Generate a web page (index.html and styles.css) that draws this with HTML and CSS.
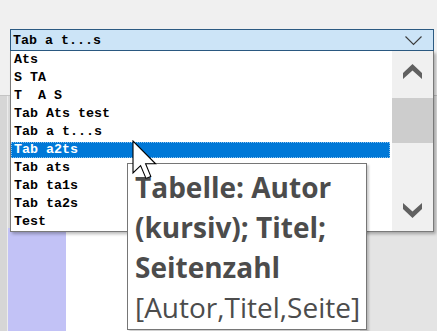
FILE: index.html
```html
<!DOCTYPE html>
<html lang="de">
<head>
  <meta charset="UTF-8" />
  <title>Tabellenformat</title>
  <link rel="stylesheet" href="styles.css">
</head>
<body>
  <div class="screen">
    <div class="combo">
      <span class="combo-text">Tab a t...s</span>
      <svg class="combo-arrow" width="17" height="10" viewBox="0 0 17 10">
        <polyline points="0.5,0.5 8.5,8.5 16.5,0.5" fill="none" stroke="#3c3c3c" stroke-width="1.1" />
      </svg>
    </div>

    <div class="backdrop">
      <div class="strip"></div>
      <div class="side">
        <div class="side-head"></div>
        <div class="side-body"></div>
      </div>
      <div class="pane"></div>
      <div class="pane-right"></div>
    </div>

    <div class="popup">
      <ul class="items">
        <li><span>Ats</span></li>
        <li><span>S TA</span></li>
        <li><span>T  A S</span></li>
        <li><span>Tab Ats test</span></li>
        <li><span>Tab a t...s</span></li>
        <li class="selected"><span>Tab a2ts</span></li>
        <li><span>Tab ats</span></li>
        <li><span>Tab ta1s</span></li>
        <li><span>Tab ta2s</span></li>
        <li><span>Test</span></li>
      </ul>
      <div class="scrollbar">
        <div class="sb-btn">
          <svg width="19" height="15" viewBox="0 0 19 15">
            <polygon points="0,9 9.5,0 19,9 19,15 9.5,6.5 0,15" fill="#606060" />
          </svg>
        </div>
        <div class="sb-track">
          <div class="sb-thumb"></div>
        </div>
        <div class="sb-btn">
          <svg width="19" height="15" viewBox="0 0 19 15">
            <polygon points="0,0 9.5,8.5 19,0 19,6 9.5,15 0,6" fill="#606060" />
          </svg>
        </div>
      </div>
    </div>

    <div class="tooltip">
      <div class="tip-title">Tabelle: Autor (kursiv); Titel; Seitenzahl</div>
      <div class="tip-code">[Autor,Titel,Seite]</div>
    </div>

    <svg class="cursor" width="26" height="42" viewBox="0 0 13 21">
      <path d="M0.5,0.5 L0.5,16.5 L4.3,12.8 L7,19.2 L9.4,18.2 L6.8,11.9 L11.8,11.9 Z"
            fill="#fff" stroke="#000" stroke-width="0.55" stroke-linejoin="miter" />
    </svg>
  </div>
</body>
</html>
```

FILE: styles.css
```css
html, body {
  margin: 0;
  padding: 0;
}

body {
  width: 437px;
  height: 331px;
  overflow: hidden;
  background: #f0f0f0;
  font-family: "Liberation Mono", monospace;
}

.screen {
  position: relative;
  width: 437px;
  height: 331px;
  display: flex;
  flex-direction: column;
}

/* combo box */
.combo {
  box-sizing: border-box;
  width: 424px;
  height: 22px;
  margin: 29px 0 0 10px;
  border: 1px solid #2b5a82;
  background: #cce4f7;
  display: flex;
  align-items: center;
  justify-content: space-between;
  padding: 0 11px 0 2px;
}

.combo-text {
  font-size: 13.33px;
  font-weight: bold;
  color: #000;
  white-space: pre;
}

.combo-arrow {
  display: block;
  margin-top: 1px;
}

/* window behind the popup */
.backdrop {
  flex: 1;
  margin-top: 44px;
  border-top: 1px solid #c4c4c4;
  display: flex;
}

.strip {
  width: 7px;
  background: #d6d6d6;
  border-right: 1px solid #ececec;
}

.side {
  width: 58px;
  display: flex;
  flex-direction: column;
}

.side-head {
  height: 132px;
  background: #dadada;
}

.side-body {
  flex: 1;
  background: #c2c2f6;
}

.pane {
  width: 294px;
  background: #fff;
}

.pane-right {
  flex: 1;
  background: #e4e4e4;
}

/* drop-down list */
.popup {
  position: absolute;
  left: 10px;
  top: 51px;
  width: 424px;
  height: 181px;
  box-sizing: border-box;
  border: 1px solid #7a7a7a;
  border-top: none;
  background: #fff;
  display: flex;
  box-shadow: 2px 2px 3px rgba(0, 0, 0, 0.28);
}

.items {
  list-style: none;
  margin: 0;
  padding: 0;
  width: 381px;
}

.items li {
  padding: 1px 2px 1px 0;
  height: 16px;
}

.items li span {
  display: block;
  height: 16px;
  line-height: 16px;
  padding-left: 3px;
  font-size: 13.33px;
  font-weight: bold;
  color: #000;
  white-space: pre;
}

.items li.selected span {
  background: #0078d7;
  color: #fff;
  box-sizing: border-box;
  outline: 1px dotted rgba(255, 255, 255, 0.55);
  outline-offset: -1px;
}

.scrollbar {
  flex: 1;
  background: #f0f0f0;
  display: flex;
  flex-direction: column;
}

.sb-btn {
  height: 41px;
  display: flex;
  align-items: center;
  justify-content: center;
}

.sb-btn svg {
  display: block;
}

.sb-track {
  flex: 1;
  padding-top: 6px;
}

.sb-thumb {
  height: 45px;
  background: #cdcdcd;
}

/* tooltip */
.tooltip {
  position: absolute;
  left: 127px;
  top: 163px;
  width: 240px;
  height: 167px;
  box-sizing: border-box;
  border: 1px solid #767676;
  background: #fff;
  box-shadow: 2px 2px 2px rgba(0, 0, 0, 0.2);
  padding: 3px 6px 0 7px;
  font-family: "Open Sans", sans-serif;
  font-size: 28px;
  line-height: 40px;
  color: #4c4c4c;
}

.tip-title {
  font-weight: bold;
}

.cursor {
  position: absolute;
  left: 132px;
  top: 140px;
}
```
